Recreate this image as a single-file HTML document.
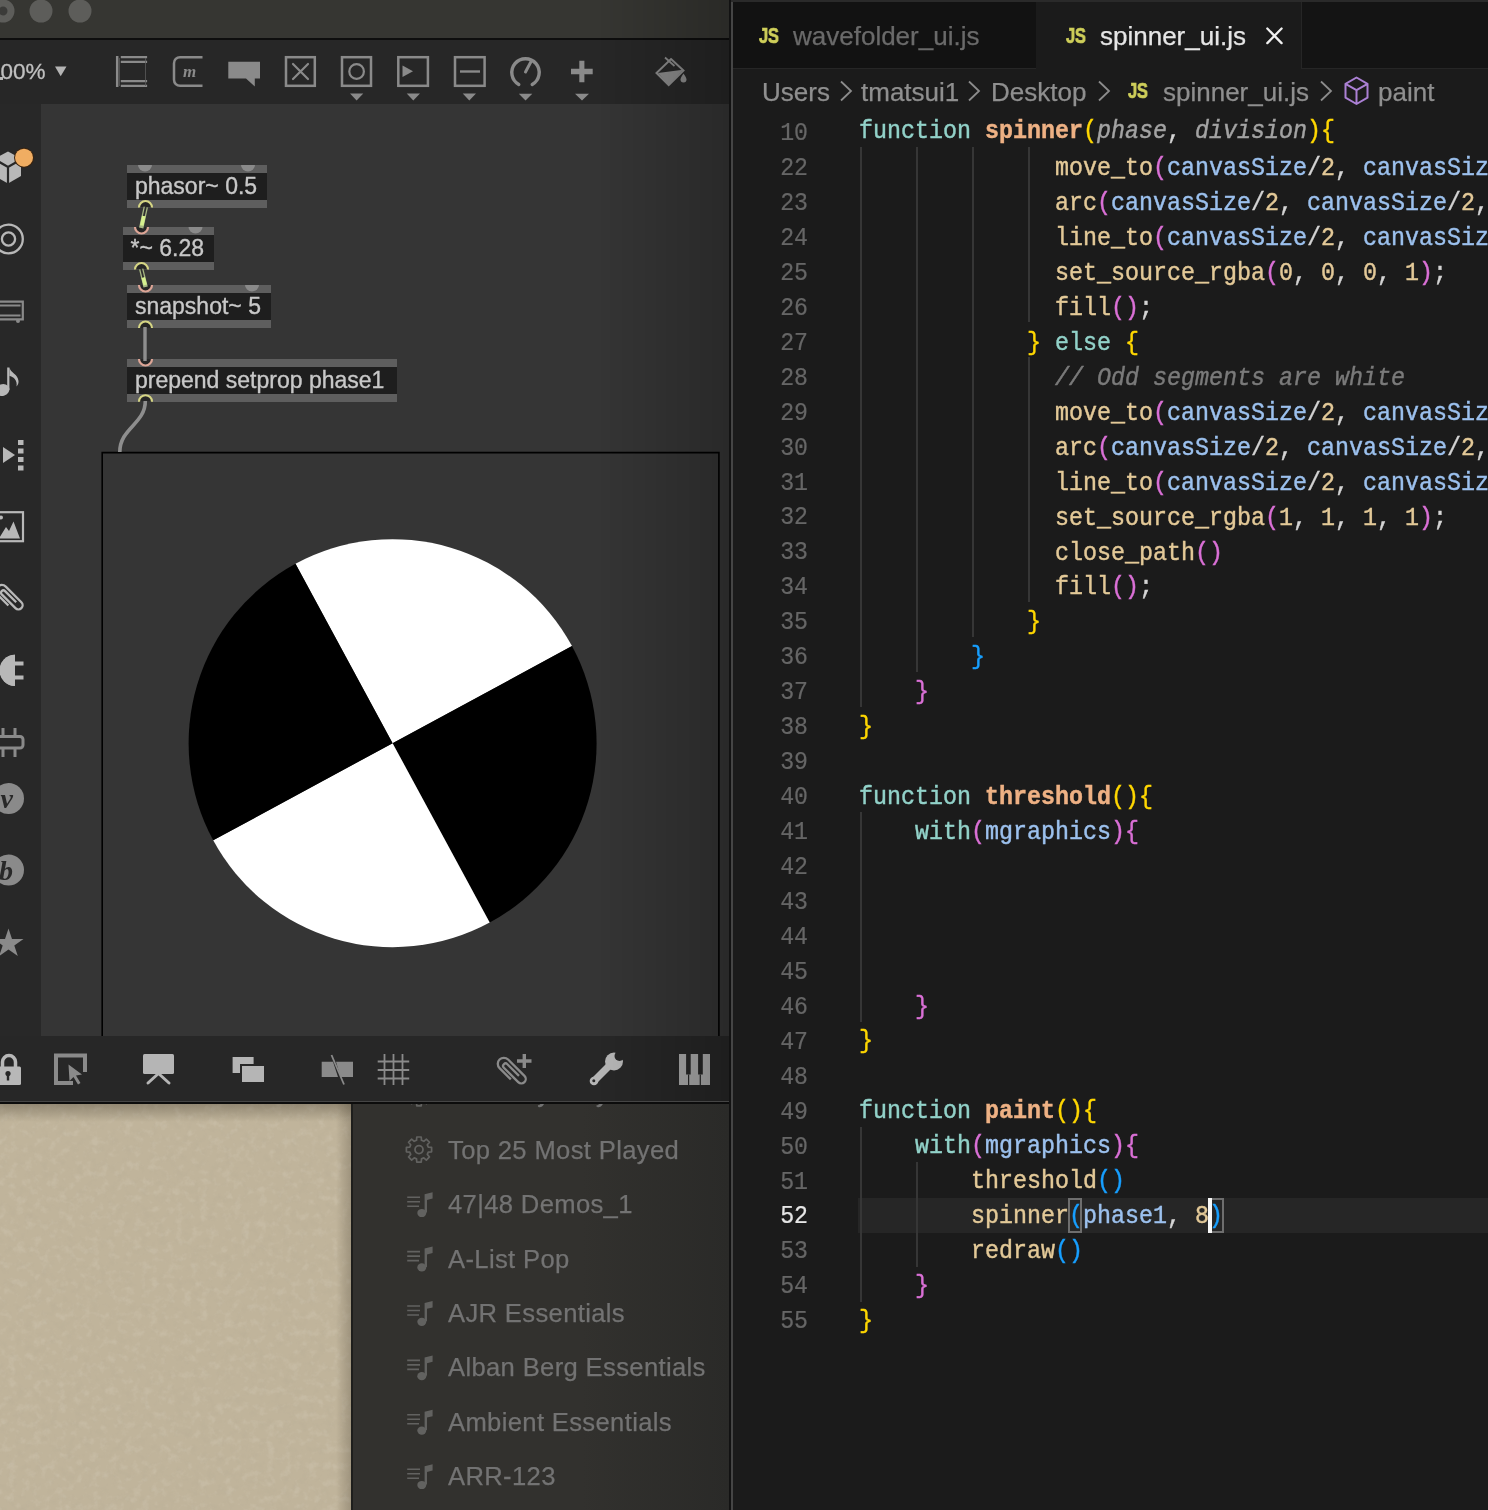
<!DOCTYPE html>
<html><head><meta charset="utf-8">
<style>
*{margin:0;padding:0;box-sizing:border-box}
html,body{width:1488px;height:1510px;overflow:hidden;background:#1b1b1b;font-family:"Liberation Sans",sans-serif;-webkit-font-smoothing:antialiased}
.obj,.mrow,.bc,.tabt,.js,.code,.ln{will-change:transform}
.a{position:absolute}
#max{left:0;top:0;width:729px;height:1104px;background:#272727;overflow:hidden}
#title{left:0;top:0;width:729px;height:38px;background:#363632}
#tline{left:0;top:38px;width:729px;height:2px;background:#0e0e0e}
#tb{left:0;top:40px;width:729px;height:64px;background:#272727}
#side{left:0;top:104px;width:41px;height:932px;background:#282828}
#canvas{left:41px;top:104px;width:688px;height:932px;background:#353535}
#btb{left:0;top:1036px;width:729px;height:65px;background:#272727}
#bline{left:0;top:1101px;width:729px;height:3px;background:#0c0c0c;border-top:1px solid #454545}
.obj{position:absolute;background:#1e1e1e;color:#c8c8c8;font-size:23px;white-space:nowrap;-webkit-text-stroke:0.35px #c8c8c8}
.obj .ts{position:absolute;left:0;right:0;top:0;height:8px;background:#5e5e5e}
.obj .bs{position:absolute;left:0;right:0;bottom:0;height:8px;background:#5e5e5e}
.obj .tx{position:absolute;left:8px;top:8px;line-height:27px}
#vs{left:733px;top:0;width:755px;height:1510px;background:#1b1b1b}
#vsl{left:729px;top:0;width:2px;height:1510px;background:#121212}
#vsl2{left:730.5px;top:0;width:2px;height:1510px;background:#454545}
#tabs{left:733px;top:0;width:755px;height:68px;background:#141414}
.code{position:absolute;left:859px;font-family:"Liberation Mono",monospace;font-size:23.33px;line-height:35px;white-space:pre;color:#d4d4d4;transform:scaleY(1.09);transform-origin:0 17.5px;-webkit-text-stroke:0.4px}
.ln{position:absolute;left:741px;width:67px;text-align:right;font-family:"Liberation Mono",monospace;font-size:23.2px;line-height:35px;color:#666;transform:scaleY(1.09);transform-origin:0 17.5px;-webkit-text-stroke:0.2px}
.guide{position:absolute;width:1.5px;background:#363636}
.ln.act{color:#e6e6e6}
#hl{left:858px;top:1197.5px;width:630px;height:35px;background:#262626}
.js{font-weight:bold;font-size:21px;color:#cfcf5a;letter-spacing:-0.3px;line-height:26px;transform:scale(0.78,1.04);transform-origin:0 0;-webkit-text-stroke:0.7px #cfcf5a}
.tabt{font-size:26px;line-height:36px;white-space:nowrap;-webkit-text-stroke:0.25px}
.bc{font-size:26px;line-height:36px;color:#8f8f8f;white-space:nowrap;-webkit-text-stroke:0.25px}
.mrow{position:absolute;left:447.5px;font-size:25.6px;line-height:36px;letter-spacing:0.35px;color:#737373;-webkit-text-stroke:0.25px;white-space:nowrap;margin-top:1.4px}
#music{left:352px;top:1104px;width:377px;height:406px;background:#2e2e2c}
#beige{left:0;top:1104px;width:352px;height:406px;background:#b3aa95}
</style></head><body>
<div id="beige" class="a" style="background:#c0b49b"></div>
<svg class="a" style="left:0;top:1104px" width="352" height="406" viewBox="0 0 352 406"><filter id="tx" x="0" y="0" width="100%" height="100%"><feTurbulence type="fractalNoise" baseFrequency="0.12" numOctaves="3" seed="7"/><feColorMatrix type="matrix" values="0 0 0 0 0.45  0 0 0 0 0.40  0 0 0 0 0.30  3 0 0 0 -1.5"/></filter><rect width="352" height="406" filter="url(#tx)" opacity="0.2"/><filter id="tx2" x="0" y="0" width="100%" height="100%"><feTurbulence type="fractalNoise" baseFrequency="0.12" numOctaves="3" seed="11"/><feColorMatrix type="matrix" values="0 0 0 0 0.9  0 0 0 0 0.87  0 0 0 0 0.8  3 0 0 0 -1.5"/></filter><rect width="352" height="406" filter="url(#tx2)" opacity="0.12"/></svg>
<div class="a" style="left:0;top:1104px;width:352px;height:406px;background:linear-gradient(to bottom,rgba(40,32,20,0.3),rgba(40,32,20,0) 18px),linear-gradient(to right,rgba(40,32,20,0) 336px,rgba(40,32,20,0.22) 351px)"></div>
<div id="music" class="a" style="background:linear-gradient(to right,#32312e 0,#32312e 230px,#2a2a28 377px)"></div>
<div class="a" style="left:351px;top:1104px;width:2px;height:406px;background:#1e1e1c"></div>
<div class="mrow" style="top:1074px">Recently Played</div>
<div class="mrow" style="top:1130.5px">Top 25 Most Played</div>
<div class="mrow" style="top:1184.9px">47|48 Demos_1</div>
<div class="mrow" style="top:1239.3px">A-List Pop</div>
<div class="mrow" style="top:1293.7px">AJR Essentials</div>
<div class="mrow" style="top:1348.1px">Alban Berg Essentials</div>
<div class="mrow" style="top:1402.5px">Ambient Essentials</div>
<div class="mrow" style="top:1456.9px">ARR-123</div>
<svg class="a" style="left:352px;top:1080px" width="377" height="430" viewBox="352 1080 377 430">
<defs>
<g id="pl"><path d="M407.2 1197.2H420M407.2 1201.7H420M407.2 1206.2H419" stroke="#626260" stroke-width="1.6"/>
<path d="M424.6 1194.2L432.6 1192.2V1198.6L427 1200V1212.5H424.6Z" fill="#626260"/>
<ellipse cx="421.8" cy="1213" rx="4.5" ry="4.1" fill="#626260"/></g>
<g id="gear"><circle cx="419" cy="1149.6" r="4" fill="none" stroke="#626260" stroke-width="1.8"/><path d="M428.27 1147.12 L431.61 1147.38 L431.61 1151.82 L428.27 1152.08 L427.31 1154.40 L429.49 1156.94 L426.34 1160.09 L423.80 1157.91 L421.48 1158.87 L421.22 1162.21 L416.78 1162.21 L416.52 1158.87 L414.20 1157.91 L411.66 1160.09 L408.51 1156.94 L410.69 1154.40 L409.73 1152.08 L406.39 1151.82 L406.39 1147.38 L409.73 1147.12 L410.69 1144.80 L408.51 1142.26 L411.66 1139.11 L414.20 1141.29 L416.52 1140.33 L416.78 1136.99 L421.22 1136.99 L421.48 1140.33 L423.80 1141.29 L426.34 1139.11 L429.49 1142.26 L427.31 1144.80Z" fill="none" stroke="#626260" stroke-width="1.7" stroke-linejoin="round"/></g>
</defs>
<use href="#gear" y="-56.4"/>
<use href="#gear"/>
<use href="#pl" y="0"/>
<use href="#pl" y="54.4"/>
<use href="#pl" y="108.8"/>
<use href="#pl" y="163.2"/>
<use href="#pl" y="217.6"/>
<use href="#pl" y="272"/>
</svg>

<div id="max" class="a">
  <div id="title" class="a"></div>
  <div id="tline" class="a"></div>
  <div id="tb" class="a"></div>
  <div id="side" class="a"></div>
  <div id="canvas" class="a"></div>
  <div id="btb" class="a"></div>
  <div id="bline" class="a"></div>
  <div class="a" style="left:-12px;top:57px;font-size:22.5px;color:#c0c0c0;line-height:30px;-webkit-text-stroke:0.3px #c0c0c0;will-change:transform">100%</div>
<div class="a" style="left:0;top:77px;width:2.5px;height:2.5px;background:#b8b8b8"></div>
<svg class="a" style="left:0;top:0" width="729" height="1104" viewBox="0 0 729 1104">
<!-- traffic lights -->
<circle cx="3" cy="11" r="11.5" fill="#5d5d5a"/><circle cx="3" cy="11" r="4.5" fill="#3b3b39"/>
<circle cx="41" cy="11" r="11.5" fill="#5d5d5a"/>
<circle cx="80" cy="11" r="11.5" fill="#5d5d5a"/>
<!-- zoom dropdown -->
<path d="M55 66.5H66.5L60.7 76.2Z" fill="#b4b4b4"/>
<g fill="none" stroke="#8a8a8a">
<!-- object box -->
<path d="M117.2 56V87" stroke-width="2.5"/>
<path d="M120.8 57.2H147.1M120.8 61.8H147.1M120.8 81.2H147.1M120.8 85.8H147.1" stroke-width="2.2"/>
<path d="M119.5 58V86M145.5 58V86" stroke-width="0.8" stroke="#5a5a5a"/>
<!-- message -->
<path d="M202.5 57.2H180A6 6 0 0 0 174 63.2V79.8A6 6 0 0 0 180 85.8H202.5" stroke-width="2.5"/>
<!-- toggle -->
<rect x="286" y="57.2" width="28.8" height="28.6" stroke-width="2.5"/>
<path d="M293 64L308 79M308 64L293 79" stroke-width="2.2" stroke-linecap="round"/>
<!-- button -->
<rect x="342" y="57.2" width="29" height="28.6" stroke-width="2.5"/>
<circle cx="356.6" cy="71.5" r="7.3" stroke-width="2.2"/>
<!-- play msg -->
<rect x="398.3" y="57.2" width="29.6" height="28.6" stroke-width="2.5"/>
<!-- number -->
<rect x="455" y="57.2" width="29.6" height="28.6" stroke-width="2.5"/>
<path d="M460 71.5H480" stroke-width="2.4"/>
<!-- dial -->
<path d="M518.8 84.4A13.7 13.7 0 1 1 532.2 84.4" stroke-width="3.4" stroke-linecap="round"/>
<path d="M525.5 72L530.8 62" stroke-width="3" stroke-linecap="round"/>
<!-- bucket outline -->
<path d="M671 59L683.5 70.5L668.7 85.2L656.5 73Z" stroke-width="2"/>
<path d="M665 57.5L674.5 66" stroke-width="1.8"/>
</g>
<g fill="#8a8a8a">
<text x="183" y="77" font-family="Liberation Serif" font-style="italic" font-weight="bold" font-size="17" fill="#8a8a8a">m</text>
<path d="M228.3 61.8H260V78.5H254.8V86.6L246 78.5H228.3Z"/>
<path d="M402.5 65.5V77L413 71.2Z"/>
<path d="M579.3 60.8H584.4V82.3H579.3Z M571 68.8H592.7V74.2H571Z"/>
<path d="M350 93.5H363.3L356.6 100.5Z M406.7 93.5H420L413.3 100.5Z M462.7 93.5H476L469.3 100.5Z M518.8 93.7H532.3L525.5 100.6Z M575 93.7H589L582 100.6Z"/>
<path d="M658 73L683 69.8L668.7 85.2Z"/>
<path d="M683.5 73.5C681 77 680.5 78.5 680.5 79.5A3 3 0 0 0 686.5 79.5C686.5 78.5 686 77 683.5 73.5Z"/>
</g>
<!-- left sidebar icons -->
<g fill="#b8b8b8">
<path d="M8 151.5L21 158.5V176L8 183.5L-5 176V158.5Z"/>
</g>
<path d="M-5 159.5L8 167L21 159.5M8 167V184" stroke="#282828" stroke-width="2.2" fill="none"/>
<circle cx="24" cy="157.7" r="10" fill="#3a2410"/>
<circle cx="24" cy="157.7" r="9" fill="#f0ad62"/>
<g fill="none" stroke="#b8b8b8" stroke-width="2.3">
<circle cx="8.5" cy="239" r="14.3"/>
<circle cx="8.5" cy="239" r="6.6"/>
</g>
<g fill="none" stroke="#8a8a8a" stroke-width="2.2">
<path d="M-2 301.6H22.8V319.4H-2 M-2 305.5H20.5 M-2 315.5H20.5"/>
</g>
<circle cx="18" cy="321" r="2" fill="#8a8a8a"/>
<!-- note -->
<g fill="#b8b8b8">
<ellipse cx="2.5" cy="390" rx="7" ry="5.8" transform="rotate(-20 2.5 390)"/>
<path d="M7.2 367.5H9.4V390H7.2Z"/>
<path d="M9.4 367.5C10.5 373 18 374 18.5 381C18.7 383 18 385 16.5 386.5C17.8 380 13 376.5 9.4 376Z"/>
<path d="M3 447V463L15 455Z"/>
<rect x="18" y="440" width="5.5" height="5"/><rect x="18" y="448.5" width="5.5" height="5"/><rect x="18" y="457" width="5.5" height="5"/><rect x="18" y="465.5" width="5.5" height="5"/>
</g>
<!-- image -->
<rect x="-2" y="512.2" width="25" height="29" fill="none" stroke="#b8b8b8" stroke-width="2.2"/>
<path d="M-1 538.5L6 527L9 531L13.5 521.5L20 538.5Z" fill="#b8b8b8"/>
<circle cx="1" cy="517.5" r="2" fill="#b8b8b8"/>
<!-- paperclip -->
<g transform="translate(9.5 598.5) rotate(135) scale(1.05)"><path d="M-2 -7V8A2.25 2.25 0 0 0 2.5 8V-10.5A4 4 0 0 0 -5.5 -10.5V10.5A5.5 5.5 0 0 0 5.5 10.5V-4" fill="none" stroke="#b8b8b8" stroke-width="2.2"/></g>
<!-- plug -->
<path d="M15 654.8V686A15.5 15.6 0 0 1 15 654.8Z" fill="#b8b8b8" transform="translate(0 0)"/>
<path d="M0 670A15 15.6 0 0 1 15 654.8V686A15 15.6 0 0 1 0 670Z" fill="#b8b8b8"/>
<rect x="14" y="661.5" width="9.5" height="4" fill="#b8b8b8"/><rect x="14" y="675.5" width="9.5" height="4" fill="#b8b8b8"/>
<!-- circuit -->
<g fill="none" stroke="#8a8a8a" stroke-width="3">
<path d="M-2 736.5H20A3 3 0 0 1 23 739.5V745A3 3 0 0 1 20 748H-2"/>
<path d="M3 728V736.5M15 728V736.5M3 748V757M15 748V757"/>
</g>
<!-- v b -->
<circle cx="8.5" cy="798.5" r="15.5" fill="#8a8a8a"/>
<text x="0.5" y="808" font-family="Liberation Serif" font-style="italic" font-weight="bold" font-size="28" fill="#282828">v</text>
<circle cx="8.5" cy="870" r="15.5" fill="#8a8a8a"/>
<text x="-1" y="880" font-family="Liberation Serif" font-style="italic" font-weight="bold" font-size="28" fill="#282828">b</text>
<!-- star -->
<path d="M8.5 928.5L12 939H23.5L14.3 945.5L17.8 956L8.5 949.5L-0.8 956L2.7 945.5L-6.5 939H5Z" fill="#8a8a8a"/>
<!-- bottom toolbar -->
<g fill="#b8b8b8">
<path d="M-2 1066.5H19.5A1.5 1.5 0 0 1 21 1068V1083.5A1.5 1.5 0 0 1 19.5 1085H-2Z"/>
</g>
<path d="M2.5 1067V1062A6.5 6.5 0 0 1 15.5 1062V1067" fill="none" stroke="#b8b8b8" stroke-width="3.5"/>
<circle cx="8" cy="1073.5" r="2.6" fill="#282828"/><rect x="6.8" y="1074" width="2.4" height="6.5" fill="#282828"/>
<g fill="none" stroke="#8a8a8a" stroke-width="4">
<path d="M85 1072V1055.5H56V1083H73"/>
</g>
<path d="M68.5 1064.5L82 1074.5L76 1075.5L80.5 1083L78 1084.5L73.5 1077L69.5 1081Z" fill="#8a8a8a"/>
<g fill="#b5b5b5">
<rect x="143" y="1054" width="31" height="20" rx="1.5"/>
<rect x="232.6" y="1057" width="21" height="16"/>
</g>
<path d="M148 1083L158.5 1073.5L169 1083" fill="none" stroke="#b5b5b5" stroke-width="3" stroke-linecap="round"/>
<rect x="240" y="1064" width="26" height="20" fill="#272727"/>
<rect x="242" y="1066" width="22" height="16" fill="#b5b5b5"/>
<!-- hide icon -->
<path d="M321.7 1061.7H333L338 1077H321.7Z M336 1061.7H353V1077H340.5Z" fill="#8a8a8a"/>
<path d="M331.5 1055L344 1084.5" stroke="#8a8a8a" stroke-width="1.8"/>
<!-- grid -->
<path d="M384.5 1054V1085M393.5 1054V1085M402.5 1054V1085M377.7 1061.5H409.2M377.7 1070H409.2M377.7 1078.5H409.2" stroke="#8a8a8a" stroke-width="1.8"/>
<!-- paperclip plus -->
<g transform="translate(512 1072) rotate(135) scale(1.1)"><path d="M-2 -7V8A2.25 2.25 0 0 0 2.5 8V-10.5A4 4 0 0 0 -5.5 -10.5V10.5A5.5 5.5 0 0 0 5.5 10.5V-4" fill="none" stroke="#8a8a8a" stroke-width="2.1"/></g>
<path d="M524.3 1054V1068M517 1061H531.5" stroke="#8a8a8a" stroke-width="3.4"/>
<!-- wrench -->
<mask id="wm"><rect x="580" y="1040" width="50" height="55" fill="#fff"/><circle cx="619.5" cy="1056" r="5" fill="#000"/><path d="M619.5 1056L626 1049.5L630 1058Z" fill="#000"/><circle cx="593.8" cy="1080.8" r="1.5" fill="#000"/></mask>
<g mask="url(#wm)" fill="#b5b5b5"><path d="M594 1081L610 1065" stroke="#b5b5b5" stroke-width="7" stroke-linecap="round"/>
<circle cx="614" cy="1061.5" r="9"/><circle cx="594" cy="1081" r="4.3"/></g>
<!-- piano -->
<rect x="679" y="1054" width="31" height="31" fill="#aaaaaa"/>
<path d="M686.1 1054H690.7V1074.5H686.1Z M698.1 1054H702.8V1074.5H698.1Z" fill="#272727"/>
<path d="M688.6 1074.5V1085M700.3 1074.5V1085" stroke="#272727" stroke-width="1.2"/>
</svg>
<div class="obj" style="left:127px;top:165px;width:139.5px;height:42.5px"><div class="ts"></div><div class="bs"></div><div class="tx" style="top:7.5px">phasor~ 0.5</div></div>
<div class="obj" style="left:123px;top:227px;width:91px;height:43px"><div class="ts"></div><div class="bs"></div><div class="tx" style="left:7.5px">*~ 6.28</div></div>
<div class="obj" style="left:127px;top:285px;width:143.5px;height:43px"><div class="ts"></div><div class="bs"></div><div class="tx">snapshot~ 5</div></div>
<div class="obj" style="left:127px;top:359px;width:270px;height:43px"><div class="ts"></div><div class="bs"></div><div class="tx">prepend setprop phase1</div></div>
<svg class="a" style="left:0;top:0" width="729" height="1104" viewBox="0 0 729 1104">
<!-- spinner canvas -->
<path d="M102.2 1036V452.6H718.9V1036" fill="none" stroke="#000" stroke-width="1.6"/>
<g transform="translate(392.6 743.2)">
<path d="M0 0L-97.1 -179.4A204 204 0 0 1 179.4 -97.1Z" fill="#fff"/>
<path d="M0 0L179.4 -97.1A204 204 0 0 1 97.1 179.4Z" fill="#000"/>
<path d="M0 0L97.1 179.4A204 204 0 0 1 -179.4 97.1Z" fill="#fff"/>
<path d="M0 0L-179.4 97.1A204 204 0 0 1 -97.1 -179.4Z" fill="#000"/>
</g>
<!-- inlets (gray half discs) -->
<g fill="#8a8a8a">
<path d="M138 165A7 6.5 0 0 0 152 165Z"/>
<path d="M241 165A7 6.5 0 0 0 255 165Z"/>
<path d="M188.5 227A7 6.5 0 0 0 202.5 227Z"/>
<path d="M245 285A7 6.5 0 0 0 259 285Z"/>
</g>
<!-- outlet rings (yellow) -->
<g fill="#262626" stroke="#d6d684" stroke-width="2.1">
<path d="M139 207.5A6.5 6.5 0 0 1 152 207.5"/>
<path d="M135 269.5A6.5 6.5 0 0 1 148 269.5"/>
<path d="M139 328A6.5 6.5 0 0 1 152 328"/>
<path d="M139 401.7A6.5 6.5 0 0 1 152 401.7"/>
</g>
<!-- inlet rings (pink) -->
<g fill="#262626" stroke="#dda596" stroke-width="2.2">
<path d="M135 227A6.5 6.5 0 0 0 148 227"/>
<path d="M139 285A6.5 6.5 0 0 0 152 285"/>
<path d="M139 359A6.5 6.5 0 0 0 152 359"/>
</g>
<!-- cords -->
<path d="M145.8 207L141.2 228" stroke="#a8b884" stroke-width="4.4"/>
<path d="M145.8 207L143.6 217" stroke="#2e2e2e" stroke-width="1.8"/>
<path d="M143.8 216L141.8 225.5" stroke="#d6f08e" stroke-width="3.6"/>
<path d="M141.2 269L145.6 287" stroke="#a8b884" stroke-width="4.4"/>
<path d="M141.2 269L143.4 278" stroke="#2e2e2e" stroke-width="1.8"/>
<path d="M143.2 277.5L145.2 285" stroke="#d6f08e" stroke-width="3.6"/>
<path d="M145 327V361" stroke="#8e8e8e" stroke-width="3.4"/>
<path d="M145.3 401C145.3 424 119.8 428 119.8 452" fill="none" stroke="#8e8e8e" stroke-width="3.6"/>
</svg>
<div class="a" style="left:600px;top:0;width:129px;height:1101px;background:linear-gradient(to right,rgba(0,0,0,0),rgba(0,0,0,0.22))"></div>

</div>
<div id="vsl" class="a"></div>
<div id="vsl2" class="a"></div>
<div id="vs" class="a"></div>
<div id="tabs" class="a"></div>
<div class="a" style="left:731px;top:0;width:757px;height:2px;background:#2a2a2a"></div>
<div class="a" style="left:733px;top:2px;width:303.5px;height:67px;background:#121212;border-right:1px solid #262626;border-bottom:1px solid #262626"></div>
<div class="a" style="left:1036px;top:2px;width:266px;height:67px;background:#1b1b1b;border-right:1px solid #262626"></div>
<div class="a" style="left:1302px;top:2px;width:186px;height:67px;background:#141414;border-bottom:1px solid #262626"></div>
<div class="a js" style="left:759px;top:22px">JS</div>
<div class="a tabt" style="left:793px;top:18px;color:#6a6a6a">wavefolder_ui.js</div>
<div class="a js" style="left:1066px;top:22px">JS</div>
<div class="a tabt" style="left:1100px;top:18px;color:#e6e6e6">spinner_ui.js</div>
<svg class="a" style="left:1264px;top:25px" width="22" height="22" viewBox="0 0 22 22"><path d="M3.3 3.5L17.6 18.1M17.6 3.5L3.3 18.1" stroke="#f0f0f0" stroke-width="2.3" stroke-linecap="round"/></svg>
<div class="a bc" style="left:762px;top:74px">Users</div>
<svg class="a chev" style="left:839px;top:80px" width="14" height="22" viewBox="0 0 14 22"><path d="M2 1.5L12 11L2 20.5" fill="none" stroke="#8c8c8c" stroke-width="1.8"/></svg>
<div class="a bc" style="left:861px;top:74px">tmatsui1</div>
<svg class="a chev" style="left:967px;top:80px" width="14" height="22" viewBox="0 0 14 22"><path d="M2 1.5L12 11L2 20.5" fill="none" stroke="#8c8c8c" stroke-width="1.8"/></svg>
<div class="a bc" style="left:991px;top:74px">Desktop</div>
<svg class="a chev" style="left:1097px;top:80px" width="14" height="22" viewBox="0 0 14 22"><path d="M2 1.5L12 11L2 20.5" fill="none" stroke="#8c8c8c" stroke-width="1.8"/></svg>
<div class="a js" style="left:1128px;top:77px">JS</div>
<div class="a bc" style="left:1163px;top:74px">spinner_ui.js</div>
<svg class="a chev" style="left:1319px;top:80px" width="14" height="22" viewBox="0 0 14 22"><path d="M2 1.5L12 11L2 20.5" fill="none" stroke="#8c8c8c" stroke-width="1.8"/></svg>
<svg class="a" style="left:1343px;top:76px" width="27" height="30" viewBox="0 0 27 30"><path d="M13.5 1.5L24.5 7.8V21.7L13.5 28L2.5 21.7V7.8Z M2.5 7.8L13.5 14.2L24.5 7.8 M13.5 14.2V28" fill="none" stroke="#ab80d4" stroke-width="2" stroke-linejoin="round"/></svg>
<div class="a bc" style="left:1378px;top:74px">paint</div>
<div id="hl" class="a"></div>
<div class="ln" style="top:117.00px">10</div>
<div class="code" style="top:114.50px"><span style="color:#92d2c9;">function </span><span style="color:#eeb184;font-weight:bold">spinner</span><span style="color:#ffd700;">(</span><span style="color:#a3a3a3;font-style:italic">phase</span><span style="color:#d4d4d4;">, </span><span style="color:#a3a3a3;font-style:italic">division</span><span style="color:#ffd700;">){</span></div>
<div class="ln" style="top:151.95px">22</div>
<div class="code" style="top:152.42px">              <span style="color:#e3c998;">move_to</span><span style="color:#da70d6;">(</span><span style="color:#9cc1ee;">canvasSize</span><span style="color:#d4d4d4;">/</span><span style="color:#e3c998;">2</span><span style="color:#d4d4d4;">, </span><span style="color:#9cc1ee;">canvasSiz</span></div>
<div class="ln" style="top:186.90px">23</div>
<div class="code" style="top:187.34px">              <span style="color:#e3c998;">arc</span><span style="color:#da70d6;">(</span><span style="color:#9cc1ee;">canvasSize</span><span style="color:#d4d4d4;">/</span><span style="color:#e3c998;">2</span><span style="color:#d4d4d4;">, </span><span style="color:#9cc1ee;">canvasSize</span><span style="color:#d4d4d4;">/</span><span style="color:#e3c998;">2</span><span style="color:#d4d4d4;">,</span></div>
<div class="ln" style="top:221.85px">24</div>
<div class="code" style="top:222.26px">              <span style="color:#e3c998;">line_to</span><span style="color:#da70d6;">(</span><span style="color:#9cc1ee;">canvasSize</span><span style="color:#d4d4d4;">/</span><span style="color:#e3c998;">2</span><span style="color:#d4d4d4;">, </span><span style="color:#9cc1ee;">canvasSiz</span></div>
<div class="ln" style="top:256.80px">25</div>
<div class="code" style="top:257.18px">              <span style="color:#e3c998;">set_source_rgba</span><span style="color:#da70d6;">(</span><span style="color:#e3c998;">0</span><span style="color:#d4d4d4;">, </span><span style="color:#e3c998;">0</span><span style="color:#d4d4d4;">, </span><span style="color:#e3c998;">0</span><span style="color:#d4d4d4;">, </span><span style="color:#e3c998;">1</span><span style="color:#da70d6;">)</span><span style="color:#d4d4d4;">;</span></div>
<div class="ln" style="top:291.75px">26</div>
<div class="code" style="top:292.10px">              <span style="color:#e3c998;">fill</span><span style="color:#da70d6;">()</span><span style="color:#d4d4d4;">;</span></div>
<div class="ln" style="top:326.70px">27</div>
<div class="code" style="top:327.02px">            <span style="color:#ffd700;">}</span><span style="color:#92d2c9;"> else </span><span style="color:#ffd700;">{</span></div>
<div class="ln" style="top:361.65px">28</div>
<div class="code" style="top:361.94px">              <span style="color:#7a7a7a;font-style:italic">// Odd segments are white</span></div>
<div class="ln" style="top:396.60px">29</div>
<div class="code" style="top:396.86px">              <span style="color:#e3c998;">move_to</span><span style="color:#da70d6;">(</span><span style="color:#9cc1ee;">canvasSize</span><span style="color:#d4d4d4;">/</span><span style="color:#e3c998;">2</span><span style="color:#d4d4d4;">, </span><span style="color:#9cc1ee;">canvasSiz</span></div>
<div class="ln" style="top:431.55px">30</div>
<div class="code" style="top:431.78px">              <span style="color:#e3c998;">arc</span><span style="color:#da70d6;">(</span><span style="color:#9cc1ee;">canvasSize</span><span style="color:#d4d4d4;">/</span><span style="color:#e3c998;">2</span><span style="color:#d4d4d4;">, </span><span style="color:#9cc1ee;">canvasSize</span><span style="color:#d4d4d4;">/</span><span style="color:#e3c998;">2</span><span style="color:#d4d4d4;">,</span></div>
<div class="ln" style="top:466.50px">31</div>
<div class="code" style="top:466.70px">              <span style="color:#e3c998;">line_to</span><span style="color:#da70d6;">(</span><span style="color:#9cc1ee;">canvasSize</span><span style="color:#d4d4d4;">/</span><span style="color:#e3c998;">2</span><span style="color:#d4d4d4;">, </span><span style="color:#9cc1ee;">canvasSiz</span></div>
<div class="ln" style="top:501.45px">32</div>
<div class="code" style="top:501.62px">              <span style="color:#e3c998;">set_source_rgba</span><span style="color:#da70d6;">(</span><span style="color:#e3c998;">1</span><span style="color:#d4d4d4;">, </span><span style="color:#e3c998;">1</span><span style="color:#d4d4d4;">, </span><span style="color:#e3c998;">1</span><span style="color:#d4d4d4;">, </span><span style="color:#e3c998;">1</span><span style="color:#da70d6;">)</span><span style="color:#d4d4d4;">;</span></div>
<div class="ln" style="top:536.40px">33</div>
<div class="code" style="top:536.54px">              <span style="color:#e3c998;">close_path</span><span style="color:#da70d6;">()</span></div>
<div class="ln" style="top:571.35px">34</div>
<div class="code" style="top:571.46px">              <span style="color:#e3c998;">fill</span><span style="color:#da70d6;">()</span><span style="color:#d4d4d4;">;</span></div>
<div class="ln" style="top:606.30px">35</div>
<div class="code" style="top:606.38px">            <span style="color:#ffd700;">}</span></div>
<div class="ln" style="top:641.25px">36</div>
<div class="code" style="top:641.30px">        <span style="color:#179fff;">}</span></div>
<div class="ln" style="top:676.20px">37</div>
<div class="code" style="top:676.22px">    <span style="color:#da70d6;">}</span></div>
<div class="ln" style="top:711.15px">38</div>
<div class="code" style="top:711.14px"><span style="color:#ffd700;">}</span></div>
<div class="ln" style="top:746.10px">39</div>
<div class="ln" style="top:781.05px">40</div>
<div class="code" style="top:780.98px"><span style="color:#92d2c9;">function </span><span style="color:#eeb184;font-weight:bold">threshold</span><span style="color:#ffd700;">(){</span></div>
<div class="ln" style="top:816.00px">41</div>
<div class="code" style="top:815.90px">    <span style="color:#92d2c9;">with</span><span style="color:#da70d6;">(</span><span style="color:#9cc1ee;">mgraphics</span><span style="color:#da70d6;">){</span></div>
<div class="ln" style="top:850.95px">42</div>
<div class="ln" style="top:885.90px">43</div>
<div class="ln" style="top:920.85px">44</div>
<div class="ln" style="top:955.80px">45</div>
<div class="ln" style="top:990.75px">46</div>
<div class="code" style="top:990.50px">    <span style="color:#da70d6;">}</span></div>
<div class="ln" style="top:1025.70px">47</div>
<div class="code" style="top:1025.42px"><span style="color:#ffd700;">}</span></div>
<div class="ln" style="top:1060.65px">48</div>
<div class="ln" style="top:1095.60px">49</div>
<div class="code" style="top:1095.26px"><span style="color:#92d2c9;">function </span><span style="color:#eeb184;font-weight:bold">paint</span><span style="color:#ffd700;">(){</span></div>
<div class="ln" style="top:1130.55px">50</div>
<div class="code" style="top:1130.18px">    <span style="color:#92d2c9;">with</span><span style="color:#da70d6;">(</span><span style="color:#9cc1ee;">mgraphics</span><span style="color:#da70d6;">){</span></div>
<div class="ln" style="top:1165.50px">51</div>
<div class="code" style="top:1165.10px">        <span style="color:#e3c998;">threshold</span><span style="color:#179fff;">()</span></div>
<div class="ln act" style="top:1200.45px">52</div>
<div class="code" style="top:1200.02px">        <span style="color:#e3c998;">spinner</span><span style="color:#179fff;">(</span><span style="color:#9cc1ee;">phase1</span><span style="color:#d4d4d4;">, </span><span style="color:#e3c998;">8</span><span style="color:#179fff;">)</span></div>
<div class="ln" style="top:1235.40px">53</div>
<div class="code" style="top:1234.94px">        <span style="color:#e3c998;">redraw</span><span style="color:#179fff;">()</span></div>
<div class="ln" style="top:1270.35px">54</div>
<div class="code" style="top:1269.86px">    <span style="color:#da70d6;">}</span></div>
<div class="ln" style="top:1305.30px">55</div>
<div class="code" style="top:1304.78px"><span style="color:#ffd700;">}</span></div>
<div class="guide" style="left:860.0px;top:147.00px;height:560.00px"></div>
<div class="guide" style="left:916.0px;top:147.00px;height:525.00px"></div>
<div class="guide" style="left:972.0px;top:147.00px;height:490.00px"></div>
<div class="guide" style="left:1028.0px;top:147.00px;height:175.00px"></div>
<div class="guide" style="left:1028.0px;top:357.00px;height:245.00px"></div>
<div class="guide" style="left:860.0px;top:812.00px;height:210.00px"></div>
<div class="guide" style="left:860.0px;top:1127.00px;height:175.00px"></div>
<div class="guide" style="left:916.0px;top:1162.00px;height:105.00px"></div>
<div class="a" style="left:1068px;top:1197.5px;width:14px;height:35px;border:2px solid #6e6e6e"></div>
<div class="a" style="left:1209.5px;top:1197.5px;width:14px;height:35px;border:2px solid #6e6e6e"></div>
<div class="a" style="left:1208px;top:1197.5px;width:4px;height:35px;background:#f8f8f8"></div>
</body></html>
